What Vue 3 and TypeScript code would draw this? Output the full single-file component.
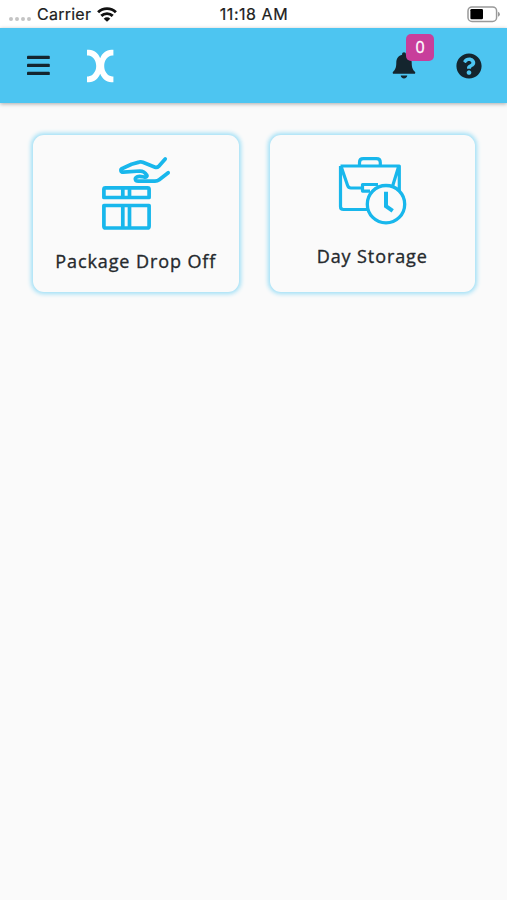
<script setup lang="ts">
import { ref } from 'vue'

const notifications = ref<number>(0)
const signalDots: number[] = [1, 2, 3, 4]
</script>

<template>
  <div class="screen">
    <div class="status">
      <div class="status-left">
        <span class="dots"><i v-for="d in signalDots" :key="d" class="dot"></i></span>
        <span class="carrier">Carrier</span>
        <svg class="wifi" width="20" height="15" viewBox="0 0 20 15" fill="none" stroke="#111" stroke-width="2.900">
          <path d="M1.100 5.200a12.800 12.800 0 0 1 17.800 0" />
          <path d="M4.300 8.900a8.200 8.200 0 0 1 11.400 0" />
          <path d="M10 14.800L6.700 11.700a4.700 4.700 0 0 1 6.600 0z" fill="#111" stroke="none" />
        </svg>
      </div>
      <span class="time">11:18 AM</span>
      <div class="status-right">
        <svg width="33" height="17" viewBox="0 0 33 17">
          <rect x="1" y="0.900" width="28.600" height="14.600" rx="4" fill="#fff" stroke="#999" stroke-width="1.500" />
          <rect x="3.400" y="3" width="12.600" height="10.200" rx="1.200" fill="#000" />
          <path d="M31 5.700v5q1.900-.7 1.900-2.500t-1.900-2.500z" fill="#999" />
        </svg>
      </div>
    </div>

    <header class="bar">
      <button class="icon-button menu" aria-label="Menu">
        <svg width="24" height="21" viewBox="0 0 24 21" fill="#14252e">
          <rect x="1" y="0.800" width="22.800" height="3.300" rx="0.900" />
          <rect x="1" y="8.800" width="22.800" height="3.300" rx="0.900" />
          <rect x="1" y="16.800" width="22.800" height="3.300" rx="0.900" />
        </svg>
      </button>
      <svg class="logo" width="28" height="34" viewBox="0 0 28 34" fill="#fff">
        <path d="M1 .8h2C8.500.8 12.300 4.500 14.200 9.200 16.100 4.500 20 .8 25.400.8h2v5.800h-1.200C21.600 7 18.200 11.500 18.200 17s3.400 10 8 10.400h1.200v5.800h-2c-5.400 0-9.300-3.700-11.200-8.400C12.300 29.500 8.500 33.200 3 33.200H1v-5.800h1.200C6.800 27 10.200 22.500 10.200 17S6.800 7 2.200 6.600H1z" />
      </svg>
      <button class="icon-button bell" aria-label="Notifications">
        <svg width="24" height="27" viewBox="0 0 24 27" fill="#14252e">
          <path d="M12 .3c1.100 0 1.900.8 1.900 1.800v.7c3.700.9 5.800 3.900 5.800 7.700 0 5.200 1.100 7.300 3.200 9.200.8.8.5 2.100-.8 2.100H1.900c-1.300 0-1.600-1.300-.8-2.100 2.100-1.900 3.200-4 3.200-9.200 0-3.800 2.100-6.800 5.800-7.700v-.7c0-1 .8-1.800 1.900-1.800zM8.700 23.500h6.600c-.2 1.700-1.500 2.900-3.300 2.900s-3.100-1.200-3.300-2.900z" />
        </svg>
        <span class="badge">{{ notifications }}</span>
      </button>
      <button class="icon-button help" aria-label="Help">
        <svg width="26" height="26" viewBox="0 0 512 512" fill="#14252e">
          <path d="M504 256c0 136.997-111.043 248-248 248S8 392.997 8 256C8 119.083 119.043 8 256 8s248 111.083 248 248zM262.655 90c-54.497 0-89.255 22.957-116.549 63.758-3.536 5.286-2.353 12.415 2.715 16.258l34.699 26.310c5.205 3.947 12.621 3.008 16.665-2.122 17.864-22.658 30.113-35.797 57.303-35.797 20.429 0 45.698 13.148 45.698 32.958 0 14.976-12.363 22.667-32.534 33.976C247.128 238.528 216 254.941 216 296v4c0 6.627 5.373 12 12 12h56c6.627 0 12-5.373 12-12v-1.333c0-28.462 83.186-29.647 83.186-106.667 0-58.002-60.165-102-116.531-102zM256 338c-25.365 0-46 20.635-46 46 0 25.364 20.635 46 46 46s46-20.636 46-46c0-25.365-20.635-46-46-46z" />
        </svg>
      </button>
    </header>

    <main class="services">
      <section class="card">
        <svg class="art" width="76" height="82" viewBox="98 152 76 82" fill="none" stroke="#18b7ec" stroke-width="3.700" stroke-linejoin="round">
          <path stroke-linecap="round" d="M165.200 159l-6.600 7.400q-1.500 1.500-3.500.8l-12.300-5q-1.900-.7-3.700-.1l-7.600 2.200-9.200 4.200c-2.200 1.100-1.700 3.800 1 3.700l16.500-1.200c3.300.1 5.300 1.400 6.800 3.900 1 1.500-.4 2.500-2 2.200-2.600-.4-5-1.300-7.200-.4-3.200 1.300-2.400 4.500.8 4.500h16.800q2.400 0 4.200-1.400l9-7.100" />
          <path d="M103.900 197.500v-8.200q0-1.500 1.500-1.500h42.200q1.500 0 1.500 1.500v8.200zM103.900 205.500h45.200v20.700q0 1.800-1.800 1.800h-41.600q-1.800 0-1.800-1.800zM122.800 188v9.500M129.500 188v9.500M122.800 205.500V228M129.500 205.500V228" />
        </svg>
        <span class="label package-label">Package Drop Off</span>
      </section>
      <section class="card">
        <svg class="art storage-art" width="76" height="76" viewBox="335 152 76 76" fill="none" stroke="#18b7ec" stroke-width="3.200" stroke-linejoin="round">
          <path d="M359.500 165.500v-3q0-3.800 3.800-3.800h13.200q3.800 0 3.800 3.800v3" />
          <path d="M340.500 166h58.800v28M340.500 166v40.500q0 3 3 3H370M341.300 167l6.300 18.500q.8 2.500 3.400 2.500h11M398.500 167l-6.500 21" />
          <path d="M378 184.500h-15.500v6.600H370" />
          <circle cx="386" cy="204.200" r="18.700" fill="#fafafa" stroke-width="3.300" />
          <path d="M386 191.800v14.400l6.700 4.600" stroke-width="4" stroke-linejoin="miter" />
        </svg>
        <span class="label storage-label">Day Storage</span>
      </section>
    </main>
  </div>
</template>

<style>
body {
  background: #fafafa;
}
</style>

<style scoped>
.screen {
  min-height: 900px;
  background: #fafafa;
  font-family: "Open Sans", sans-serif;
}
.status {
  display: grid;
  grid-template-columns: 1fr auto 1fr;
  align-items: center;
  height: 28px;
  background: #fff;
  color: #202020;
  font: 400 16px/28px Inter, sans-serif;
}
.carrier {
  letter-spacing: 0.25px;
  -webkit-text-stroke: 0.2px #202020;
}
.time {
  padding-left: 1px;
  letter-spacing: 0.55px;
  -webkit-text-stroke: 0.2px #202020;
}
.status-left {
  display: flex;
  align-items: center;
  padding-left: 9px;
}
.dots {
  display: flex;
  gap: 2px;
  margin: 10px 6px 0 0;
}
.dot {
  width: 4px;
  height: 4px;
  border-radius: 50%;
  background: #c4c4c4;
}
.wifi {
  margin-left: 6px;
}
.status-right {
  display: flex;
  justify-content: flex-end;
  padding-right: 7px;
}
.bar {
  display: flex;
  align-items: center;
  box-sizing: border-box;
  height: 75px;
  padding: 0 25px 0 26px;
  background: #4dc5f1;
  box-shadow: 0 1px 4px rgba(0, 0, 0, 0.32);
}
.icon-button {
  display: flex;
  padding: 0;
  border: 0;
  background: none;
}
.logo {
  margin-left: 36px;
}
.bell {
  position: relative;
  margin-left: auto;
}
.badge {
  position: absolute;
  top: -18px;
  left: 14px;
  width: 28px;
  height: 27px;
  border-radius: 5px;
  background: #c83e9b;
  color: #fff;
  font: 500 16px/27px "Open Sans", sans-serif;
  text-align: center;
  -webkit-text-stroke: 0.3px #fff;
}
.help {
  margin-left: 40px;
}
.services {
  display: grid;
  grid-template-columns: 1fr 1fr;
  gap: 31px;
  padding: 32px 32px 0 33px;
}
.card {
  display: flex;
  flex-direction: column;
  align-items: center;
  box-sizing: border-box;
  height: 157px;
  padding-top: 17px;
  border-radius: 11px;
  background: #fafafa;
  box-shadow: 0 0 4px 1.5px #9fdff6;
}
.art {
  flex: none;
}
.storage-art {
  margin-left: 2px;
}
.label {
  margin-top: 14px;
  color: #25292d;
  font-size: 18px;
  font-weight: 500;
  line-height: 26px;
  white-space: nowrap;
  -webkit-text-stroke: 0.35px #25292d;
}
.package-label {
  letter-spacing: 0.9px;
}
.storage-label {
  margin-top: 15px;
  letter-spacing: 0.9px;
}
</style>
